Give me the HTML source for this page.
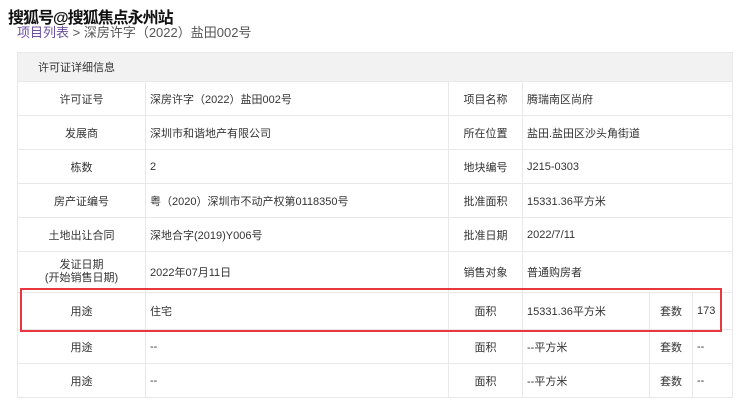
<!DOCTYPE html>
<html><head><meta charset="utf-8"><style>
body{margin:0;width:740px;height:402px;background:#fff;overflow:hidden;font-family:"Liberation Sans","Noto Sans CJK SC",sans-serif;position:relative}
.t{position:absolute;left:8px;top:4px;font-size:16px;font-weight:bold;color:#111;text-shadow:0 0 2px #fff,0 0 2px #fff;letter-spacing:-1px}
.b{position:absolute;left:17px;top:22px;font-size:13px;color:#555}
.b span{color:#6b4fa0}
table{position:absolute;left:17px;top:52px;width:715px;border-collapse:collapse;font-size:11px;color:#333;table-layout:fixed}
td{border:1px solid #e8e8e8;padding:0 4px;height:33px}
td.l{text-align:center}
tr.h td{background:#f2f2f2;height:28px;padding-left:20px}
.box{position:absolute;left:20px;top:288px;width:698px;height:40px;border:2px solid #e8383d}
</style></head><body>
<div class="t">搜狐号@搜狐焦点永州站</div>
<div class="b"><span>项目列表</span> &gt; 深房许字（2022）盐田002号</div>
<table>
<col style="width:128px"><col style="width:303px"><col style="width:74px"><col style="width:127px"><col style="width:43px"><col style="width:40px">
<tr class="h"><td colspan="6">许可证详细信息</td></tr>
<tr><td class="l">许可证号</td><td>深房许字（2022）盐田002号</td><td class="l">项目名称</td><td colspan="3">腾瑞南区尚府</td></tr>
<tr><td class="l">发展商</td><td>深圳市和谐地产有限公司</td><td class="l">所在位置</td><td colspan="3">盐田.盐田区沙头角街道</td></tr>
<tr><td class="l">栋数</td><td>2</td><td class="l">地块编号</td><td colspan="3">J215-0303</td></tr>
<tr><td class="l">房产证编号</td><td>粤（2020）深圳市不动产权第0118350号</td><td class="l">批准面积</td><td colspan="3">15331.36平方米</td></tr>
<tr><td class="l">土地出让合同</td><td>深地合字(2019)Y006号</td><td class="l">批准日期</td><td colspan="3">2022/7/11</td></tr>
<tr><td class="l" style="height:40px;line-height:13px">发证日期<br>(开始销售日期)</td><td>2022年07月11日</td><td class="l">销售对象</td><td colspan="3">普通购房者</td></tr>
<tr><td class="l" style="height:36px">用途</td><td>住宅</td><td class="l">面积</td><td>15331.36平方米</td><td class="l">套数</td><td>173</td></tr>
<tr><td class="l">用途</td><td>--</td><td class="l">面积</td><td>--平方米</td><td class="l">套数</td><td>--</td></tr>
<tr><td class="l">用途</td><td>--</td><td class="l">面积</td><td>--平方米</td><td class="l">套数</td><td>--</td></tr>
</table>
<div class="box"></div>
</body></html>
